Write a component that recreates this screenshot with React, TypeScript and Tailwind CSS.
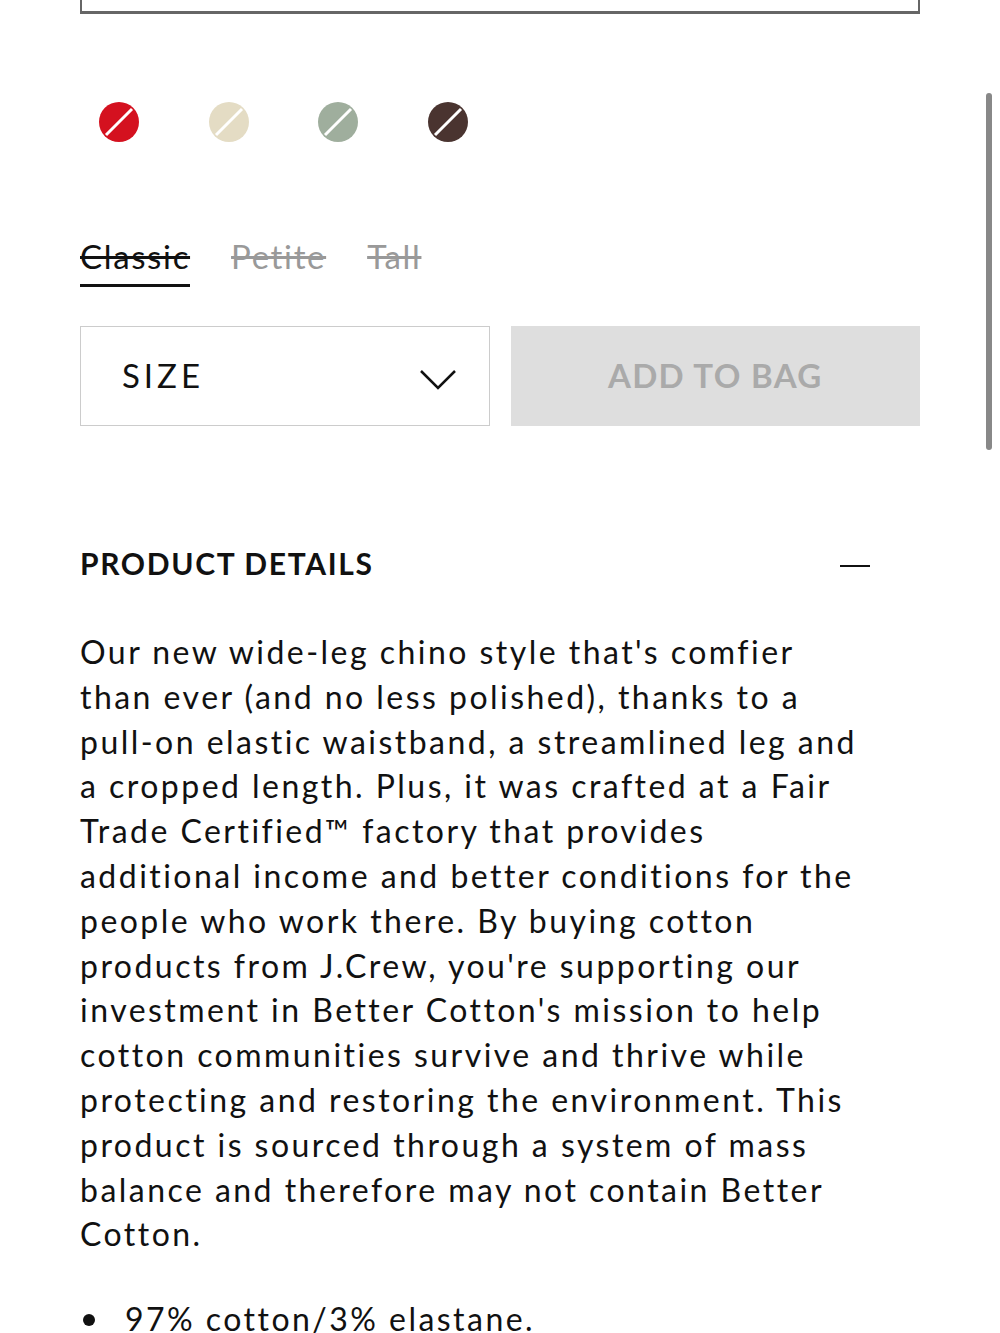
import React from "react";

const swatches = ["#d4111f", "#e4dcc4", "#9fae9d", "#4a3430"];

const lines = [
  "Our new wide-leg chino style that's comfier",
  "than ever (and no less polished), thanks to a",
  "pull-on elastic waistband, a streamlined leg and",
  "a cropped length. Plus, it was crafted at a Fair",
  "Trade Certified™ factory that provides",
  "additional income and better conditions for the",
  "people who work there. By buying cotton",
  "products from J.Crew, you're supporting our",
  "investment in Better Cotton's mission to help",
  "cotton communities survive and thrive while",
  "protecting and restoring the environment. This",
  "product is sourced through a system of mass",
  "balance and therefore may not contain Better",
  "Cotton.",
];

function Swatch({ color }: { color: string }) {
  return (
    <div className="relative w-[40px] h-[40px] rounded-full overflow-hidden" style={{ backgroundColor: color }}>
      <svg className="absolute inset-0" width="40" height="40" viewBox="0 0 40 40">
        <line x1="7" y1="33" x2="33" y2="7" stroke="#fff" strokeWidth="3" />
      </svg>
    </div>
  );
}

export default function App() {
  return (
    <div className="relative w-[1000px] h-[1333px] overflow-hidden bg-white font-['Lato',sans-serif] text-[#111]">
      {/* scrollbar */}
      <div className="absolute right-[8px] top-[93px] w-[6px] h-[357px] rounded-full bg-[#888]" />

      <div className="px-[80px]">
        {/* previous field bottom */}
        <div className="h-[14px] border-x-2 border-b-[3px] border-[#666]" />

        {/* colour swatches */}
        <div className="flex gap-[69.5px] pl-[19px] mt-[88px]">
          {swatches.map((c) => (
            <Swatch key={c} color={c} />
          ))}
        </div>

        {/* fit tabs */}
        <div className="flex gap-[41px] mt-[94px] text-[33px] leading-[40px] tracking-[0.05em]">
          <div className="flex flex-col">
            <span className="line-through text-[#111]">Classic</span>
            <span className="mt-[8px] h-[3px] bg-[#111]" />
          </div>
          <span className="line-through text-[#999]">Petite</span>
          <span className="line-through text-[#999]">Tall</span>
        </div>

        {/* size + add */}
        <div className="grid grid-cols-2 gap-[21px] mt-[39px]">
          <div className="h-[100px] border border-[#ccc] flex items-center justify-between pl-[41px] pr-[32px]">
            <span className="text-[33px] tracking-[0.12em]">SIZE</span>
            <svg className="mt-[6px]" width="38" height="22" viewBox="0 0 38 22" fill="none" stroke="#111" strokeWidth="2.5">
              <polyline points="2,3 19,20 36,3" />
            </svg>
          </div>
          <div className="h-[100px] bg-[#dedede] flex items-center justify-center">
            <span className="text-[33px] font-bold tracking-[0.04em] text-[#aaa]">ADD TO BAG</span>
          </div>
        </div>

        {/* product details */}
        <div className="flex items-center justify-between mt-[115px] pr-[50px]">
          <h2 className="text-[30px] font-bold tracking-[0.055em]">PRODUCT DETAILS</h2>
          <span className="w-[30px] h-[2px] bg-[#111] mt-[4px]" />
        </div>

        <p className="mt-[44px] text-[32px] leading-[44.8px] tracking-[0.077em] whitespace-nowrap">
          {lines.map((l, i) => (
            <React.Fragment key={i}>
              {l}
              {i < lines.length - 1 && <br />}
            </React.Fragment>
          ))}
        </p>

        <ul className="mt-[40px] text-[32px] leading-[44.8px] tracking-[0.077em]">
          <li className="flex items-center">
            <span className="w-[12px] h-[12px] rounded-full bg-[#111] ml-[3px] mr-[30px]" />
            97% cotton/3% elastane.
          </li>
        </ul>
      </div>
    </div>
  );
}
